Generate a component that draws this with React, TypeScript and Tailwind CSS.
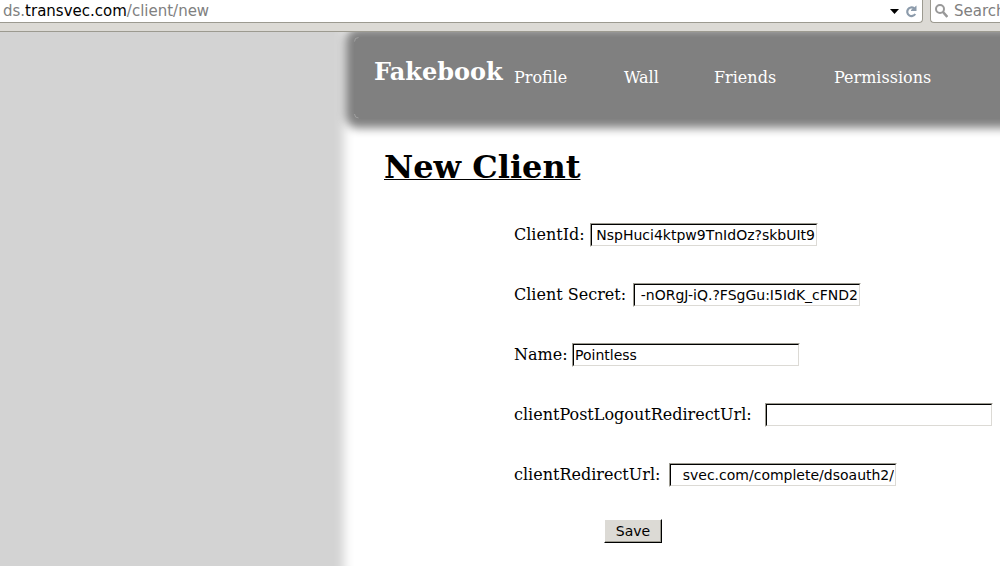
type Field = { id: string; label: string; value: string; labelClass: string; inputClass: string };

const fields: Field[] = [
  {
    id: "clientId",
    label: "ClientId:",
    value: "NspHuci4ktpw9TnIdOz?skbUIt9",
    labelClass: "min-w-[72px]",
    inputClass: "text-right",
  },
  {
    id: "clientSecret",
    label: "Client Secret:",
    value: "-nORgJ-iQ.?FSgGu:I5IdK_cFND2",
    labelClass: "min-w-[115px]",
    inputClass: "text-right",
  },
  { id: "name", label: "Name:", value: "Pointless", labelClass: "min-w-[54px]", inputClass: "text-left" },
  {
    id: "postLogout",
    label: "clientPostLogoutRedirectUrl:",
    value: "",
    labelClass: "min-w-[247px]",
    inputClass: "text-left",
  },
  {
    id: "redirect",
    label: "clientRedirectUrl:",
    value: "svec.com/complete/dsoauth2/",
    labelClass: "min-w-[151px]",
    inputClass: "text-right",
  },
];

const links = [
  { text: "Profile", width: "w-[110px]" },
  { text: "Wall", width: "w-[90px]" },
  { text: "Friends", width: "w-[120px]" },
  { text: "Permissions", width: "w-[120px]" },
];

function TextField({ id, label, value, labelClass, inputClass }: Field) {
  return (
    <div className="flex items-center gap-1">
      <label htmlFor={id} className={`whitespace-nowrap ${labelClass}`}>
        {label}
      </label>
      <span className="flex border border-t-[#9c9a90] border-r-white border-b-white border-l-[#9c9a90]">
        <input
          id={id}
          type="text"
          defaultValue={value}
          className={`h-[22px] w-[226px] border border-t-black border-r-[#dcdad5] border-b-[#dcdad5] border-l-black bg-white px-px font-['DejaVu_Sans',sans-serif] text-[14px] text-black outline-none ${inputClass}`}
        />
      </span>
    </div>
  );
}

function Toolbar() {
  return (
    <div className="relative z-10 flex h-8 items-start gap-[7px] border-b border-[#9c9a90] bg-[#dcdad5] font-['DejaVu_Sans',sans-serif] text-[15px]">
      <div className="flex h-[23px] min-w-0 flex-1 items-center rounded-br-sm border-r border-b border-[#9c9a90] bg-white pr-1 pl-[3px] text-[#808080]">
        <span className="flex-1 whitespace-nowrap">
          ds.<span className="text-black">transvec.com</span>/client/new
        </span>
        <button type="button" aria-label="Show history" className="mr-1.5">
          <svg width="9" height="5" viewBox="0 0 9 5">
            <path d="M0 0h9L4.5 5z" fill="#000" />
          </svg>
        </button>
        <button type="button" aria-label="Reload">
          <svg width="13" height="13" viewBox="0 0 13 13" fill="none">
            <path d="M9 3.2A4.3 4.3 0 1 0 10.2 9" stroke="#8c9bab" strokeWidth="2.2" />
            <path d="M11.5 0.5v5.5H6V5z" fill="#8c9bab" />
          </svg>
        </button>
      </div>
      <div className="flex h-[23px] w-[70px] shrink-0 items-center gap-1.5 overflow-hidden rounded-bl-sm border-b border-l border-[#9c9a90] bg-white pl-1">
        <svg width="13" height="14" viewBox="0 0 13 14" fill="none" stroke="#999" className="shrink-0">
          <circle cx="5" cy="5" r="4" strokeWidth="2" />
          <path d="M8 8l4.3 5" strokeWidth="2.6" />
        </svg>
        <input
          type="text"
          aria-label="Search"
          placeholder="Search"
          className="w-16 shrink-0 outline-none placeholder:text-[#808080]"
        />
      </div>
    </div>
  );
}

export default function App() {
  return (
    <div className="flex min-h-screen flex-col overflow-hidden bg-[#d3d3d3] font-['DejaVu_Serif',serif] text-[16px] text-black">
      <Toolbar />
      <div className="flex flex-1">
        <div className="w-[354px] shrink-0" />
        <main className="min-w-0 flex-1 bg-white pt-[5px] shadow-[0_0_10px_10px_white]">
          <header className="relative -mr-8 flex h-[82px] rounded-[5px] bg-[#808080] pl-5 text-white shadow-[0_0_10px_9px_#808080]">
            <svg className="absolute top-0 left-0" width="5" height="82" fill="none" stroke="#a8a8a8" strokeWidth="0.8">
              <path d="M0.5 4.5Q0.5 0.5 4.5 0.5" />
              <path d="M0.5 77Q0.5 81 4.5 81" />
            </svg>
            <h1 className="w-[140px] shrink-0 pt-[21px] text-[24px] leading-7 font-bold">Fakebook</h1>
            <nav className="flex pt-[31px] leading-5">
              {links.map(({ text, width }) => (
                <span key={text} className={width}>
                  <a href="#">{text}</a>
                </span>
              ))}
            </nav>
          </header>
          <h2 className="mt-7 ml-[30px] text-[32px] leading-10 font-bold underline decoration-1">New Client</h2>
          <form className="mt-9 ml-40 flex flex-col items-start gap-9" onSubmit={(e) => e.preventDefault()}>
            {fields.map((field) => (
              <TextField key={field.id} {...field} />
            ))}
            <button
              type="submit"
              className="-mt-1 ml-[90px] h-6 w-[58px] border border-t-white border-r-black border-b-black border-l-white bg-[#dcdad5] font-['DejaVu_Sans',sans-serif] text-[14px] leading-5 shadow-[inset_-1px_-1px_0_#9c9a90]"
            >
              Save
            </button>
          </form>
        </main>
      </div>
    </div>
  );
}
